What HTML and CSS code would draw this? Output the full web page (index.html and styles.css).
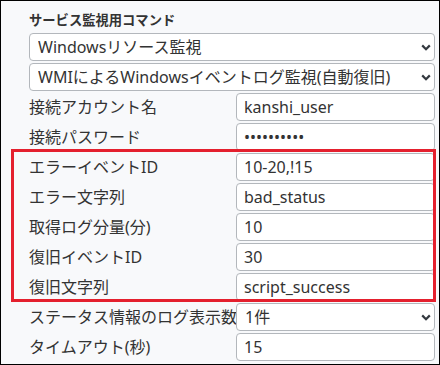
FILE: index.html
```html
<!DOCTYPE html>
<html lang="ja">
<head>
    <meta charset="UTF-8">
    <meta name="viewport" content="width=device-width, initial-scale=1.0">
    <title>サービス監視用コマンド</title>
    <link rel="stylesheet" href="styles.css">
</head>
<body>
    <div class="panel">
        <h3 class="panel-title">サービス監視用コマンド</h3>
        <div class="form-grid">
            <div class="select-wrap wide">
                <select class="field">
                    <option>Windowsリソース監視</option>
                </select>
                <svg class="chevron" width="10" height="7" viewBox="0 0 10 7"><path d="M1.2 1.4l3.8 3.8 3.8-3.8" fill="none" stroke="#343a40" stroke-width="2.2"/></svg>
            </div>
            <div class="select-wrap wide">
                <select class="field">
                    <option>WMIによるWindowsイベントログ監視(自動復旧)</option>
                </select>
                <svg class="chevron" width="10" height="7" viewBox="0 0 10 7"><path d="M1.2 1.4l3.8 3.8 3.8-3.8" fill="none" stroke="#343a40" stroke-width="2.2"/></svg>
            </div>

            <label class="label">接続アカウント名</label>
            <input class="field" type="text" value="kanshi_user">

            <label class="label">接続パスワード</label>
            <input class="field" type="password" value="xxxxxxxxxx">

            <label class="label">エラーイベントID</label>
            <input class="field" type="text" value="10-20,!15">

            <label class="label">エラー文字列</label>
            <input class="field" type="text" value="bad_status">

            <label class="label">取得ログ分量(分)</label>
            <input class="field" type="text" value="10">

            <label class="label">復旧イベントID</label>
            <input class="field" type="text" value="30">

            <label class="label">復旧文字列</label>
            <input class="field" type="text" value="script_success">

            <label class="label">ステータス情報のログ表示数</label>
            <div class="select-wrap">
                <select class="field">
                    <option>1件</option>
                </select>
                <svg class="chevron" width="10" height="7" viewBox="0 0 10 7"><path d="M1.2 1.4l3.8 3.8 3.8-3.8" fill="none" stroke="#343a40" stroke-width="2.2"/></svg>
            </div>

            <label class="label">タイムアウト(秒)</label>
            <input class="field" type="text" value="15">
        </div>
        <div class="highlight"></div>
    </div>
</body>
</html>
```

FILE: styles.css
```css
body {
    margin: 0;
    font-family: "Noto Sans", "Noto Sans CJK JP", sans-serif;
    color: #333;
}
.panel {
    position: relative;
    width: 440px;
    height: 365px;
    box-sizing: border-box;
    border: 1px solid #000;
    background: #f8f9fb;
    padding: 10px 4px 0 28px;
}
.panel-title {
    margin: 0 0 3px;
    font-size: 13.3px;
    line-height: 19px;
    font-weight: bold;
    color: #333;
}
.form-grid {
    display: grid;
    grid-template-columns: 207px 1fr;
    grid-auto-rows: 28px;
    row-gap: 2px;
}
.wide {
    grid-column: 1 / 3;
}
.label {
    font-size: 16px;
    line-height: 28px;
    white-space: nowrap;
}
.field {
    width: 100%;
    height: 28px;
    box-sizing: border-box;
    border: 1px solid #b3b7bc;
    border-radius: 4px;
    background: #fff;
    padding: 0 7px;
    font-family: inherit;
    font-size: 16px;
    color: #333;
    outline: none;
}
select.field {
    appearance: none;
    -webkit-appearance: none;
    padding: 0 24px 0 8px;
}
.select-wrap {
    position: relative;
}
.chevron {
    position: absolute;
    right: 4px;
    top: 11px;
    pointer-events: none;
}
.highlight {
    position: absolute;
    left: 10px;
    top: 148px;
    width: 425px;
    height: 153px;
    box-sizing: border-box;
    border: 3px solid #e4202e;
    pointer-events: none;
}
```
